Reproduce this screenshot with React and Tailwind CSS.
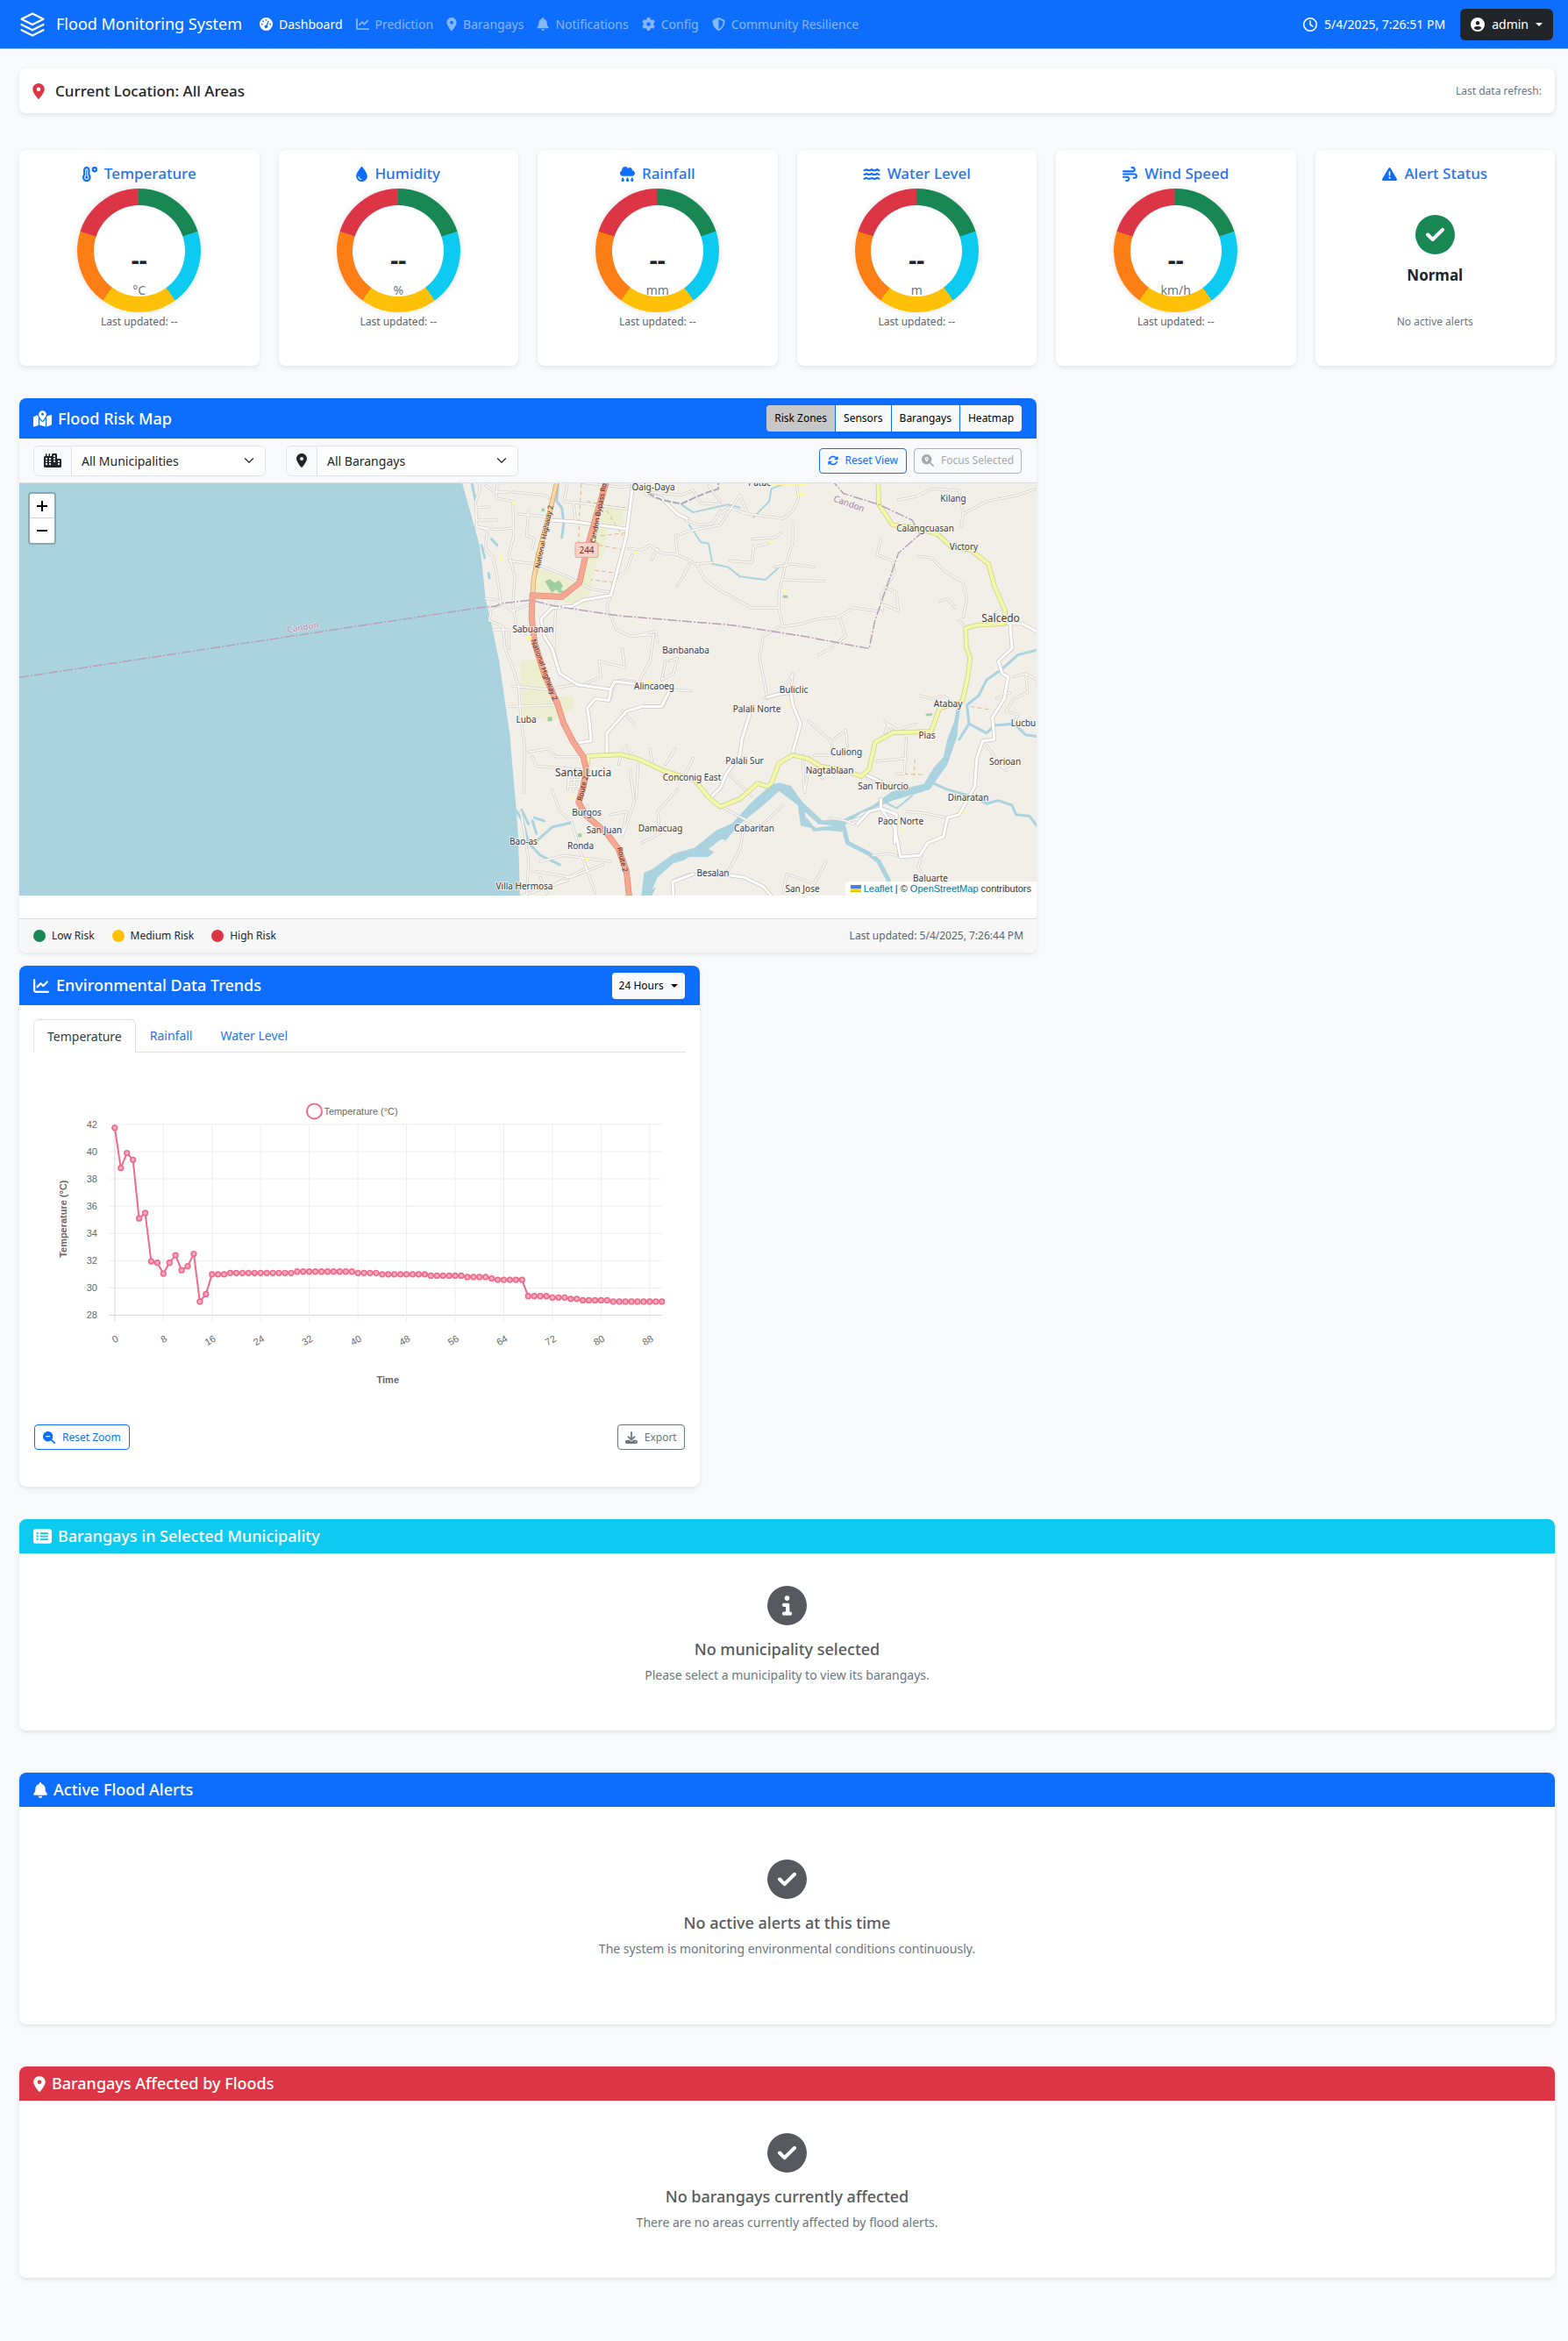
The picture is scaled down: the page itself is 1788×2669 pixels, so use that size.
import React from "react";
import {
  FaGaugeHigh,
  FaChartLine,
  FaLocationDot,
  FaBell,
  FaGear,
  FaShieldHalved,
  FaRegClock,
  FaCircleUser,
  FaTemperatureHigh,
  FaDroplet,
  FaCloudRain,
  FaWater,
  FaWind,
  FaTriangleExclamation,
  FaMapLocationDot,
  FaCity,
  FaArrowsRotate,
  FaMagnifyingGlassLocation,
  FaMagnifyingGlassMinus,
  FaDownload,
  FaRectangleList,
  FaCircleInfo,
  FaCircleCheck,
} from "react-icons/fa6";

const navItems = [
  { label: "Dashboard", Icon: FaGaugeHigh, size: "size-[15px]", active: true },
  { label: "Prediction", Icon: FaChartLine, size: "size-[15px]" },
  { label: "Barangays", Icon: FaLocationDot, size: "h-[15px] w-3" },
  { label: "Notifications", Icon: FaBell, size: "h-[15px] w-[14px]" },
  { label: "Config", Icon: FaGear, size: "size-[15px]" },
  { label: "Community Resilience", Icon: FaShieldHalved, size: "size-[15px]" },
];

const gauges = [
  { label: "Temperature", unit: "°C", Icon: FaTemperatureHigh },
  { label: "Humidity", unit: "%", Icon: FaDroplet, iconSize: "h-[17px] w-[13px]" },
  { label: "Rainfall", unit: "mm", Icon: FaCloudRain },
  { label: "Water Level", unit: "m", Icon: FaWater, iconSize: "h-[17px] w-5" },
  { label: "Wind Speed", unit: "km/h", Icon: FaWind },
];

const cardShadow = "shadow-[0_2px_5px_rgba(0,0,0,0.09)]";

function Caret() {
  return (
    <span
      aria-hidden="true"
      className="inline-block border-x-4 border-t-4 border-x-transparent border-t-current"
    />
  );
}

function Navbar() {
  return (
    <header className="flex h-14 items-center justify-between border-b border-[#8fb9f5] bg-[#0d6efd] pr-[17px] pl-[22px] text-white">
      <div className="flex items-center">
        <a href="#" className="flex items-center gap-3 text-[18px]">
          <svg
            viewBox="0 0 24 24"
            className="size-7.5"
            fill="none"
            stroke="currentColor"
            strokeWidth="1.8"
            strokeLinecap="round"
            strokeLinejoin="round"
            aria-hidden="true"
          >
            <path d="M12 2 2 7l10 5 10-5-10-5z" />
            <path d="m2 12 10 5 10-5" />
            <path d="m2 17 10 5 10-5" />
          </svg>
          Flood Monitoring System
        </a>
        <nav className="ml-5 flex items-center gap-[15px]">
          {navItems.map(({ label, Icon, size, active }) => (
            <a
              key={label}
              href="#"
              className={
                active
                  ? "flex items-center gap-[7px] text-white"
                  : "flex items-center gap-[7px] text-white/50"
              }
            >
              <Icon className={size} />
              {label}
            </a>
          ))}
        </nav>
      </div>
      <div className="flex items-center gap-[17px]">
        <span className="flex items-center gap-2">
          <FaRegClock className="size-4" />
          5/4/2025, 7:26:51 PM
        </span>
        <button className="flex h-9 items-center gap-2 rounded-md bg-[#212529] px-3">
          <FaCircleUser className="size-4" />
          admin
          <Caret />
        </button>
      </div>
    </header>
  );
}

function CardTitle({ Icon, iconSize = "size-[17px]", children }) {
  return (
    <h2 className="flex items-center justify-center gap-2 text-[17px] leading-5 font-medium text-[#1f74f2]">
      <Icon className={`text-[#0d6efd] ${iconSize}`} />
      {children}
    </h2>
  );
}

function GaugeCard({ label, unit, Icon, iconSize }) {
  return (
    <section className={`flex h-[246px] flex-col items-center rounded-lg bg-white pt-[17px] ${cardShadow}`}>
      <CardTitle Icon={Icon} iconSize={iconSize}>{label}</CardTitle>
      <div className="mt-[7px] flex size-[141px] items-center justify-center rounded-full bg-[conic-gradient(#198754_0_20%,#0dcaf0_20%_40%,#ffc107_40%_60%,#fd7e14_60%_80%,#dc3545_80%)] shadow-[0_0_8px_rgba(0,0,0,0.12)]">
        <div className="flex size-[104px] flex-col items-center rounded-full bg-white pt-[44px]">
          <span className="text-[28px] leading-9 font-bold text-[#212529]">--</span>
          <span className="mt-[7px] text-[14px] leading-5 text-[#6c757d]">{unit}</span>
        </div>
      </div>
      <p className="mt-px text-[12px] leading-5 text-[#5c636a]">Last updated: --</p>
    </section>
  );
}

function AlertCard() {
  return (
    <section className={`flex h-[246px] flex-col items-center rounded-lg bg-white pt-[17px] ${cardShadow}`}>
      <CardTitle Icon={FaTriangleExclamation}>Alert Status</CardTitle>
      <FaCircleCheck className="mt-[37px] size-[45px] text-[#198754]" />
      <p className="mt-3 text-[17px] leading-6 font-bold">Normal</p>
      <p className="mt-[31px] text-[12px] leading-5 text-[#6c757d]">No active alerts</p>
    </section>
  );
}

const land =
  "M60 30 85 140 105 230 112 300 120 400 135 480 155 600 170 730 182 830 190 950 198 1060 203 1150 206 1250 208 1350H1570V30Z";

const fields = [
  "M395 90 470 110 475 160 430 180 425 250 400 300 380 420 300 410 350 380 385 220Z",
  "M250 300 300 320 345 350 320 395 250 385Z",
  "M208 600 250 595 270 650 290 710 345 715 345 750 300 790 215 780Z",
];

const woods = [
  "M272 345 285 338 297 350 308 342 318 360 312 372 322 378 310 384 300 372 290 382 280 362Z",
  "M280 778h10v14h-12Z",
  "M880 390h12v8h-12Z",
  "M1244 768 1262 766 1260 774 1246 776Z",
  "M356 1150h10v12h-10Z",
  "M263 112h8v10h-8Z",
];

const minorRoads = [
  "M105 30V55L95 90 98 170 125 180 120 240 140 270 150 330 160 420 135 430 130 470 165 490 170 560 190 620 205 680 210 780 220 870 218 1020",
  "M150 30 148 80 190 90 192 200 180 260 195 330 190 420 200 500 235 530",
  "M190 60 270 70 282 80M95 170 150 180 190 175M205 130 280 140M180 280 250 290 330 330 390 370 440 380",
  "M230 120 225 200 245 210 240 240M120 40 145 60 180 60M95 110 130 108M100 150 150 150",
  "M120 400 150 405 190 440 230 420M140 500 180 500 180 560M190 680 275 690 350 675M180 745 300 740",
  "M330 30 320 90 360 95 480 115M345 95 350 150M300 410 295 560 310 640 350 670",
  "M365 30 470 45 495 40M440 390 430 430 455 500 490 520 550 515 540 600 515 660",
  "M485 240 520 245 540 230 570 255 610 260 660 290 700 285",
  "M495 260 480 310 450 340 440 390M610 260 605 200 640 185 680 175 720 165 770 70",
  "M540 60 620 70 650 55 670 95 720 100M630 150 665 165 700 160 720 120M690 40 720 90M560 240 545 275",
  "M640 290 625 330 610 360M660 290 680 340 720 375 800 430 870 430",
  "M770 70 790 130 880 145 905 120 920 80 915 40M790 130 740 110 720 130",
  "M905 155 905 220 885 300 870 380 870 440 880 490 930 480 970 465 1020 460 1060 430 1120 440 1140 420 1175 440 1170 380 1150 370",
  "M800 210 860 205 875 190M745 280 800 285 805 235 840 225M860 300 905 290 960 300M880 340 985 345M1025 460 1040 520 1000 560 970 580",
  "M870 490 830 520 820 590 830 650 840 720",
  "M1130 210 1120 260 1160 280 1165 320 1130 390 1135 440M1175 85 1220 75 1260 50 1330 55 1340 130 1400 90 1480 70 1525 50",
  "M1340 130 1335 170M1225 265 1260 270 1290 310 1340 350 1350 400 1340 460M1280 410 1300 400 1320 430",
  "M500 520 555 505 560 540M470 560 475 620 410 600 415 650 360 680M580 600 570 660 600 640 610 590 590 600",
  "M500 665 460 660 445 690 440 720M585 690 645 695M575 745 590 700M470 760 500 800",
  "M830 720 875 700 905 640 900 700M945 790 970 820 1000 850 1010 900 960 900M1010 850 1040 820 1045 870",
  "M480 870 500 910M460 930 470 880M540 880 545 920M580 930 605 880M630 960 650 910M610 1010 560 1080 565 1150 520 1180",
  "M380 905 300 905 280 880 230 890M240 905 250 935 360 945M290 1010 310 1080 340 1110M380 1060 385 1110",
  "M330 960 380 955M330 980 380 975M330 1000 370 1000M335 950 330 1010M350 950 345 1015M365 950 358 1010",
  "M490 950 500 1050 470 1160 480 1080 440 1090M510 930 505 1040",
  "M210 1080 220 1150 230 1240 225 1350M260 1240 320 1220 440 1240M240 1270 340 1290 420 1250M340 1115 360 1200 400 1340",
  "M260 1290 280 1350M300 1310 380 1260M210 1350 330 1300",
  "M780 1130 770 1200 740 1270 700 1275M730 1070 820 1130 880 1060M740 960 800 1030",
  "M600 1345 600 1300 640 1280 700 1280M880 1340 890 1280 960 1310 990 1240M1000 1100 1040 1110 1060 1120 1100 1080",
  "M1195 845 1190 960 1170 960M1120 920 1195 910M1140 830 1150 800 1170 820 1220 800M1090 965 1110 990",
  "M1230 710 1260 720 1290 710 1310 730M1140 790 1165 830M1440 430 1420 450 1450 470M1330 470 1345 490",
  "M1470 650 1500 640 1505 700 1470 720 1450 760 1480 770 1470 800M1500 640 1528 660M1425 720 1460 700",
  "M1400 870 1440 940 1470 930M1430 920 1450 950M1110 1220 1150 1215 1170 1220M1235 1215 1225 1260 1245 1290",
  "M1050 1110 1080 1100M1195 1080 1240 1085 1300 1100M930 900 935 1020 945 950 970 940 980 975",
];

const whiteRoads = [
  "M497 30 490 100 480 200 455 320 440 390 370 405 340 425 290 430 262 465 270 520 290 560 310 640 355 675 440 690 450 665 500 672",
  "M285 150 345 155 480 178M530 65 570 80 610 130 635 145",
  "M440 690 435 725 400 720 380 750 385 790 390 855 360 860",
  "M590 695 570 745 520 745 480 760 430 830 430 890",
  "M840 715 870 705 900 700 905 740 925 800 905 890M795 770 775 850 770 900 735 960 720 1005 695 1035",
  "M1460 480 1465 560 1430 600 1440 640 1455 650 1445 720 1415 780 1420 850 1390 855 1375 910 1370 1000 1330 1090 1300 1100 1290 1160 1250 1180 1230 1220 1180 1225 1165 1130 1130 1070 1130 1040",
  "M1130 1070 1170 1090 1165 1180M1070 1120 1100 1080 1130 1070M1095 965 1130 985M1455 480 1490 480 1528 505",
  "M720 1280 780 1290 830 1320 850 1350M600 1350 598 1305 650 1280",
];

const yellowRoads = [
  "M1123 30 1125 100 1160 165 1225 175 1275 195 1310 235 1360 245 1405 290 1420 360 1448 440 1445 480 1375 485 1347 495 1348 555 1358 590 1352 650 1338 730 1280 750 1258 825 1160 828 1115 860 1100 945 1080 968 1040 950 975 935 945 912 905 900 870 925 850 990 840 1000 815 990 770 1040 720 1065 690 1035 655 980 575 950 510 912 465 898 382 903 380 930",
];

const rivers = [
  "M518 1350 525 1275 545 1265 600 1215 655 1195 710 1140 750 1118 800 1050 850 995 870 988 900 998 930 1050 980 1108 1035 1105 1110 1060 1160 1015 1240 992 1265 940 1290 905 1300 850 1318 790 1325 740 1335 735 1328 790 1325 840 1300 930 1255 1010 1160 1045 1080 1085 1040 1120 1030 1145 960 1135 925 1125 918 1060 870 1015 830 1060 770 1120 725 1185 690 1225 640 1225 590 1270 560 1310 545 1350Z",
];

const streams = [
  { d: "M1528 565 1480 580 1440 625 1400 660 1380 710 1350 740 1355 800 1330 850M1355 800 1400 830 1420 805 1470 800 1500 835 1528 840", w: 3 },
  { d: "M1035 1130 1045 1180 1100 1215 1125 1240 1150 1300 1140 1350", w: 5 },
  { d: "M1255 985 1300 1010 1370 1035 1400 1055 1430 1045 1465 1060 1475 1090 1510 1095 1528 1125", w: 3 },
  { d: "M305 35 302 90 315 110 320 160 315 205M85 30 95 90", w: 3 },
  { d: "M200 1080 215 1110 230 1180 260 1220 310 1250M240 1110 250 1150M250 1175 290 1130 340 1115M245 1100 270 1110M212 1075 230 1120", w: 3 },
  { d: "M640 165 670 220 690 225 700 290 740 300 770 330 835 340 870 300 890 290M620 100 650 125 740 100 770 110M805 140 845 90 850 50 880 35", w: 2 },
  { d: "M110 230 118 270M128 320 130 335M135 210 150 230", w: 3 },
  { d: "M1140 1050 1170 1070 1210 1030", w: 2 },
  { d: "M940 1105 960 1140 1030 1130", w: 3 },
];

const tracks = [
  "M365 35 360 130 358 240M380 90 440 105 480 110M430 120 470 200M415 200 480 190M410 230 475 245M400 310 460 320 450 350 390 340",
  "M1190 960 1240 962M1217 915 1215 965M1360 745 1410 755",
];

const places = [
  [745, 560, "Oaig-Daya"],
  [866, 555, "Patac"],
  [1087, 573, "Kilang"],
  [1055, 607, "Calangcuasan"],
  [1099, 628, "Victory"],
  [1141, 710, "Salcedo", true],
  [608, 722, "Sabuanan"],
  [782, 746, "Banbanaba"],
  [746, 787, "Alincaoeg"],
  [905, 791, "Buliclic"],
  [863, 813, "Palali Norte"],
  [1081, 807, "Atabay"],
  [600, 825, "Luba"],
  [1167, 829, "Lucbu"],
  [1057, 843, "Pias"],
  [965, 862, "Culiong"],
  [849, 872, "Palali Sur"],
  [946, 883, "Nagtablaan"],
  [1146, 873, "Sorioan"],
  [665, 886, "Santa Lucia", true],
  [789, 891, "Conconig East"],
  [1007, 901, "San Tiburcio"],
  [1104, 914, "Dinaratan"],
  [669, 931, "Burgos"],
  [1027, 941, "Paoc Norte"],
  [689, 951, "San Juan"],
  [753, 949, "Damacuag"],
  [860, 949, "Cabaritan"],
  [597, 964, "Bao-as"],
  [662, 969, "Ronda"],
  [813, 1000, "Besalan"],
  [1061, 1006, "Baluarte"],
  [598, 1015, "Villa Hermosa"],
  [915, 1018, "San Jose"],
];

const roadNames = [
  [623, 613, -78, "National Highway 2"],
  [685, 586, -79, "Candon Bypass Ro"],
  [618, 765, 70, "National Highway 2"],
  [667, 900, -76, "Route 2"],
  [707, 981, 77, "Route 2"],
];

function RoadLayer({ paths, casing, fill, width }) {
  return (
    <>
      {paths.map((d) => (
        <path key={`c${d}`} d={d} stroke={casing} strokeWidth={width + 1.5} vectorEffect="non-scaling-stroke" />
      ))}
      {paths.map((d) => (
        <path key={`f${d}`} d={d} stroke={fill} strokeWidth={width} vectorEffect="non-scaling-stroke" />
      ))}
    </>
  );
}

function MapCanvas() {
  return (
    <svg
      viewBox="22 551 1160 471"
      preserveAspectRatio="xMidYMid slice"
      className="block h-full w-full"
      role="img"
      aria-label="Flood risk map"
      fontFamily="'Noto Sans', sans-serif"
    >
      <rect x="22" y="551" width="1160" height="471" fill="#aad3df" />
      <g transform="translate(500 540) scale(.4464 .3571)" fill="none" strokeLinejoin="round" strokeLinecap="round">
        <path d={land} fill="#f2efe9" />
        {fields.map((d) => (
          <path key={d} d={d} fill="#ebefd0" />
        ))}
        {woods.map((d) => (
          <path key={d} d={d} fill="#9fcfa0" />
        ))}
        {rivers.map((d) => (
          <path key={d} d={d} fill="#aad3df" />
        ))}
        <path d="M560 1290 600 1245 650 1228 640 1240 590 1290 545 1330Z" fill="#f2efe9" />
        <path d="M690 1200 720 1170 732 1170 725 1195 705 1210Z" fill="#f2efe9" />
        <path d="M935 1080 970 1120 1010 1125 965 1132 940 1115Z" fill="#f2efe9" />
        {streams.map(({ d, w }) => (
          <path key={d} d={d} stroke="#aad3df" strokeWidth={w} vectorEffect="non-scaling-stroke" />
        ))}
        {tracks.map((d) => (
          <path key={d} d={d} stroke="#d9b98a" strokeWidth="1" strokeDasharray="4 4" vectorEffect="non-scaling-stroke" />
        ))}
        <RoadLayer paths={minorRoads} casing="#d3d0cb" fill="#fbfaf8" width={1.5} />
        <RoadLayer paths={whiteRoads} casing="#cac7c3" fill="#ffffff" width={3} />
        <RoadLayer paths={yellowRoads} casing="#c9cf8e" fill="#f3f7a8" width={4} />
        <RoadLayer paths={["M302 30 285 120 255 260 243 340 240 395"]} casing="#c9a063" fill="#fcd6a4" width={4} />
        <RoadLayer
          paths={[
            "M428 30 400 150 380 240 360 350 315 395 240 390 238 460 245 540 270 640 305 740 320 800 345 860 370 905 378 950 370 1000 358 1050 375 1090 430 1150 460 1200 480 1270 487 1350",
          ]}
          casing="#dd907c"
          fill="#f5a792"
          width={5.5}
        />
        <path
          d="M-1071 652 22 445 100 430 145 425 165 415 200 410 235 405 300 425 460 455 750 485 930 520 1100 560 1115 470 1175 255 1230 195 1210 150 1125 100 1035 65 1010 30"
          stroke="#b79fb8"
          strokeWidth="1.5"
          strokeLinecap="butt"
          strokeDasharray="11 2 2 2"
          vectorEffect="non-scaling-stroke"
        />
        <path d="M535 65 570 85 620 98 660 75 690 60 715 50V30" stroke="#a9a6bd" strokeWidth="2" strokeDasharray="8 2" strokeLinecap="butt" vectorEffect="non-scaling-stroke" />
        <path
          d="M222 520h16v12h-16ZM188 90h9v9h-9ZM155 265h9v12h-9ZM500 248h9v9h-9ZM918 60h16v12h-16ZM845 215h9v8h-9ZM880 372h9v9h-9ZM530 662h14v8h-14ZM890 732h9v10h-9ZM340 1030h9v8h-9ZM1180 1130h8v10h-8ZM1338 1078h9v9h-9ZM375 1228h8v10h-8ZM850 30h95v8h-95Z"
          fill="#fbf7a5"
        />
      </g>
      <rect x="656" y="619" width="26" height="17" rx="2" fill="#f7d3c9" stroke="#e7a394" />
      <text x="669" y="632" fontSize="10" textAnchor="middle" fill="#7b2b23">
        244
      </text>
      <g textAnchor="middle" fontSize="8" fill="#4b2a20">
        {roadNames.map(([x, y, angle, name]) => (
          <text key={`${name}${x}`} x={x} y={y} transform={`rotate(${angle} ${x} ${y})`}>
            {name}
          </text>
        ))}
      </g>
      <g textAnchor="middle" fontSize="10" fill="#a383a8" stroke="#f2efe9" strokeWidth="1" paintOrder="stroke">
        <text x="346" y="719" transform="rotate(-9 346 719)">Candon</text>
        <text x="967" y="578" transform="rotate(20 967 578)">Candon</text>
      </g>
      <g textAnchor="middle" fill="#3a3a3a" stroke="#f8f6f2" strokeWidth="2" strokeOpacity="0.8" paintOrder="stroke">
        {places.map(([x, y, name, town]) => (
          <text key={name} x={x} y={y} fontSize={town ? 12 : 10}>
            {name}
          </text>
        ))}
      </g>
    </svg>
  );
}

function SelectGroup({ id, label, Icon, iconSize }) {
  return (
    <div className="flex h-[35px] w-[265px] overflow-hidden rounded-md border border-[#dee2e6] bg-white">
      <label htmlFor={id} className="flex items-center border-r border-[#dee2e6] bg-[#f8f9fa] px-[11px]">
        <Icon className={iconSize} aria-hidden="true" />
      </label>
      <div className="relative flex-1">
        <select id={id} aria-label={label} className="h-full w-full appearance-none bg-transparent pr-8 pl-[11px] text-[14px]">
          <option>{label}</option>
        </select>
        <svg
          viewBox="0 0 16 16"
          className="pointer-events-none absolute top-1/2 right-3 size-3 -translate-y-1/2"
          fill="none"
          stroke="#343a40"
          strokeWidth="2"
          strokeLinecap="round"
          strokeLinejoin="round"
          aria-hidden="true"
        >
          <path d="m2 5 6 6 6-6" />
        </svg>
      </div>
    </div>
  );
}

function MapCard() {
  return (
    <section className={`w-[66.25%] overflow-hidden rounded-lg bg-white ${cardShadow}`}>
      <div className="flex h-[46px] items-center justify-between bg-[#0d6efd] pr-[17px] pl-4 text-white">
        <h2 className="flex items-center gap-[7px] text-[18px] font-medium">
          <FaMapLocationDot className="h-[19px] w-[21px]" />
          Flood Risk Map
        </h2>
        <div className="flex gap-px overflow-hidden rounded text-[12px] text-black">
          <button className="h-[30px] bg-[#c6c7c8] px-[9px]">Risk Zones</button>
          <button className="h-[30px] bg-[#f8f9fa] px-[9px]">Sensors</button>
          <button className="h-[30px] bg-[#f8f9fa] px-[9px]">Barangays</button>
          <button className="h-[30px] bg-[#f8f9fa] px-[9px]">Heatmap</button>
        </div>
      </div>
      <div className="flex h-[51px] items-center justify-between border-b border-[#dee2e6] bg-[#f8f9fa] pr-[17px] pl-4">
        <div className="flex gap-[23px]">
          <SelectGroup id="municipality" label="All Municipalities" Icon={FaCity} iconSize="h-4 w-5" />
          <SelectGroup id="barangay" label="All Barangays" Icon={FaLocationDot} iconSize="h-4 w-3" />
        </div>
        <div className="flex gap-2 text-[12px]">
          <button className="flex h-[29px] items-center gap-2 rounded border border-[#0d6efd] px-[9px] text-[#0d6efd]">
            <FaArrowsRotate className="size-3" />
            Reset View
          </button>
          <button disabled className="flex h-[29px] items-center gap-2 rounded border border-[#adb2b7] px-2 text-[#a3a9ae]">
            <FaMagnifyingGlassLocation className="size-3.5" />
            Focus Selected
          </button>
        </div>
      </div>
      <div className="relative h-[470px]">
        <MapCanvas />
        <div className="absolute top-2.5 left-2.5 flex flex-col overflow-hidden rounded border-2 border-black/20 text-black">
          <button aria-label="Zoom in" className="flex size-7 items-center justify-center border-b border-[#ccc] bg-white">
            <svg viewBox="0 0 12 12" className="size-3" stroke="currentColor" strokeWidth="2" aria-hidden="true">
              <path d="M6 0v12M0 6h12" />
            </svg>
          </button>
          <button aria-label="Zoom out" className="flex size-7 items-center justify-center bg-white">
            <svg viewBox="0 0 12 12" className="size-3" stroke="currentColor" strokeWidth="2" aria-hidden="true">
              <path d="M0 6h12" />
            </svg>
          </button>
        </div>
        <p className="absolute right-0 bottom-0 flex items-center bg-white/80 px-1.5 font-['Liberation_Sans',Arial,sans-serif] text-[11px] leading-4 text-[#333]">
          <svg viewBox="0 0 12 8" className="mr-[3px] h-2 w-3" aria-hidden="true">
            <path fill="#4C7BE1" d="M0 0h12v4H0z" />
            <path fill="#FFD500" d="M0 4h12v3H0z" />
            <path fill="#E0BC00" d="M0 7h12v1H0z" />
          </svg>
          <a href="#" className="text-[#0078a8]">Leaflet</a>
          <span className="whitespace-pre"> | © </span>
          <a href="#" className="text-[#0078a8]">OpenStreetMap</a>
          <span className="whitespace-pre"> contributors</span>
        </p>
      </div>
      <div className="mt-[26px] flex h-[39px] items-center justify-between border-t border-[#dcdddf] bg-[#f7f7f7] pr-[15px] pl-4 text-[12px]">
        <ul className="flex gap-5">
          <li className="flex items-center gap-[7px]">
            <span className="size-[14px] rounded-full bg-[#198754]" />
            Low Risk
          </li>
          <li className="flex items-center gap-[7px]">
            <span className="size-[14px] rounded-full bg-[#ffc107]" />
            Medium Risk
          </li>
          <li className="flex items-center gap-[7px]">
            <span className="size-[14px] rounded-full bg-[#dc3545]" />
            High Risk
          </li>
        </ul>
        <span className="text-[#5c636a]">Last updated: 5/4/2025, 7:26:44 PM</span>
      </div>
    </section>
  );
}

const fill = (count, value) => Array.from({ length: count }, () => value);

const temperatures = [
  41.75, 38.8, 39.9, 39.4, 35.1, 35.5, 31.95, 31.85, 31.05, 31.85, 32.4, 31.3, 31.6, 32.5, 29, 29.55,
  ...fill(3, 31),
  ...fill(11, 31.1),
  ...fill(10, 31.2),
  ...fill(4, 31.1),
  ...fill(8, 31),
  ...fill(6, 30.9),
  ...fill(4, 30.8),
  30.7,
  ...fill(5, 30.6),
  ...fill(4, 29.4),
  ...fill(3, 29.3),
  ...fill(2, 29.2),
  ...fill(5, 29.1),
  ...fill(9, 29),
];

const chartX = (i) => 93 + i * (625 / 90);
const chartY = (t) => 283 - (t - 28) * (218 / 14);

function TrendChart() {
  const xTicks = Array.from({ length: 12 }, (_, i) => i * 8);
  const yTicks = Array.from({ length: 8 }, (_, i) => 28 + i * 2);
  return (
    <svg
      viewBox="0 0 745 400"
      className="block w-full"
      role="img"
      aria-label="Temperature trend"
      fontFamily="'Liberation Sans', Arial, sans-serif"
      fontSize="11"
      fill="#666"
    >
      {yTicks.map((t) => (
        <line key={t} x1="86" x2="718" y1={chartY(t)} y2={chartY(t)} stroke={t === 28 ? "#d8d8d8" : "#ededed"} />
      ))}
      {xTicks.map((i) => (
        <line key={i} x1={chartX(i)} x2={chartX(i)} y1="65" y2="290" stroke={i === 0 ? "#d8d8d8" : "#ededed"} />
      ))}
      {yTicks.map((t) => (
        <text key={t} x="73" y={chartY(t) + 4} textAnchor="end">
          {t}
        </text>
      ))}
      {xTicks.map((i) => (
        <text key={i} x={chartX(i) + 5} y="312" textAnchor="end" transform={`rotate(-30 ${chartX(i) + 5} 312)`}>
          {i}
        </text>
      ))}
      <circle cx="321" cy="50" r="8.5" fill="#fff" stroke="#ef6a8a" strokeWidth="2" />
      <text x="332" y="54">Temperature (°C)</text>
      <text x="405" y="361" textAnchor="middle" fontWeight="bold">Time</text>
      <text x="38" y="173" textAnchor="middle" fontWeight="bold" transform="rotate(-90 38 173)">
        Temperature (°C)
      </text>
      <polyline
        points={temperatures.map((t, i) => `${chartX(i)},${chartY(t)}`).join(" ")}
        fill="none"
        stroke="#ef6a8a"
        strokeWidth="2"
      />
      {temperatures.map((t, i) => (
        <circle key={i} cx={chartX(i)} cy={chartY(t)} r="2.8" fill="#f9b0c2" stroke="#ef6a8a" strokeWidth="1.7" />
      ))}
    </svg>
  );
}

function TrendsCard() {
  return (
    <section className={`mt-[15px] w-[44.3%] overflow-hidden rounded-lg bg-white pb-[42px] ${cardShadow}`}>
      <div className="flex h-[45px] items-center justify-between bg-[#0d6efd] pr-[17px] pl-4 text-white">
        <h2 className="flex items-center gap-2 text-[18px] font-medium">
          <FaChartLine className="size-[18px]" />
          Environmental Data Trends
        </h2>
        <button className="flex h-[30px] items-center gap-2 rounded bg-[#f8f9fa] px-2 text-[12px] text-black">
          24 Hours
          <Caret />
        </button>
      </div>
      <div className="px-4 pt-4">
        <div role="tablist" className="flex border-b border-[#dee2e6] text-[14px]">
          <button role="tab" aria-selected="true" className="-mb-px h-[38px] rounded-t-md border border-b-0 border-[#dee2e6] bg-white px-[15px] text-[#343a40]">
            Temperature
          </button>
          <button role="tab" aria-selected="false" className="h-[37px] px-4 text-[#2574e8]">Rainfall</button>
          <button role="tab" aria-selected="false" className="h-[37px] px-4 text-[#2574e8]">Water Level</button>
        </div>
        <div className="mt-[17px]">
          <TrendChart />
        </div>
        <div className="mt-2 flex justify-between px-px text-[12px]">
          <button className="flex h-[29px] items-center gap-2 rounded border border-[#0d6efd] px-[9px] text-[#0d6efd]">
            <FaMagnifyingGlassMinus className="size-3.5" />
            Reset Zoom
          </button>
          <button className="flex h-[29px] items-center gap-2 rounded border border-[#6c757d] px-2 text-[#6c757d]">
            <FaDownload className="size-3.5" />
            Export
          </button>
        </div>
      </div>
    </section>
  );
}

function EmptyCard({ heading, HeadIcon, iconSize, headClass, className, bodyClass, Icon, title, text }) {
  return (
    <section className={`overflow-hidden rounded-lg bg-white ${cardShadow} ${className}`}>
      <div className={`flex h-[39px] items-center px-4 text-white ${headClass}`}>
        <h2 className="flex items-center gap-[7px] text-[18px] font-medium">
          <HeadIcon className={iconSize} />
          {heading}
        </h2>
      </div>
      <div className={`flex flex-col items-center ${bodyClass}`}>
        <Icon className="size-[45px] text-[#565a5e]" />
        <h3 className="mt-[15px] text-[18px] leading-6 font-medium text-[#565a5e]">{title}</h3>
        <p className="mt-2 text-[14px] leading-5 text-[#6c757d]">{text}</p>
      </div>
    </section>
  );
}

export default function App() {
  return (
    <div className="min-h-screen bg-[#f8f9fa] pb-[70px] font-['Noto_Sans','Open_Sans',sans-serif] text-[14px] text-[#212529]">
      <Navbar />
      <main className="mt-[22px] pr-[15px] pl-[22px]">
        <div className={`flex h-[51px] items-center justify-between rounded-lg bg-white px-[15px] ${cardShadow}`}>
          <h1 className="flex items-center gap-3 text-[17px] font-medium">
            <FaLocationDot className="h-[18px] w-[14px] text-[#dc3545]" />
            Current Location: All Areas
          </h1>
          <span className="text-[12px] text-[#6c757d]">Last data refresh:</span>
        </div>
        <div className="mt-[42px] mb-[37px] grid grid-cols-6 gap-[22px]">
          {gauges.map((g) => (
            <GaugeCard key={g.label} {...g} />
          ))}
          <AlertCard />
        </div>
        <MapCard />
        <TrendsCard />
        <EmptyCard
          className="mt-[37px]"
          headClass="bg-[#0dcaf0]"
          HeadIcon={FaRectangleList}
          iconSize="h-[19px] w-[21px]"
          heading="Barangays in Selected Municipality"
          bodyClass="pt-[37px] pb-[53px]"
          Icon={FaCircleInfo}
          title="No municipality selected"
          text="Please select a municipality to view its barangays."
        />
        <EmptyCard
          className="mt-12"
          headClass="bg-[#0d6efd]"
          HeadIcon={FaBell}
          iconSize="h-[18px] w-4"
          heading="Active Flood Alerts"
          bodyClass="pt-[60px] pb-[76px]"
          Icon={FaCircleCheck}
          title="No active alerts at this time"
          text="The system is monitoring environmental conditions continuously."
        />
        <EmptyCard
          className="mt-12"
          headClass="bg-[#dc3545]"
          HeadIcon={FaLocationDot}
          iconSize="h-[18px] w-[14px]"
          heading="Barangays Affected by Floods"
          bodyClass="pt-[37px] pb-[53px]"
          Icon={FaCircleCheck}
          title="No barangays currently affected"
          text="There are no areas currently affected by flood alerts."
        />
      </main>
    </div>
  );
}
